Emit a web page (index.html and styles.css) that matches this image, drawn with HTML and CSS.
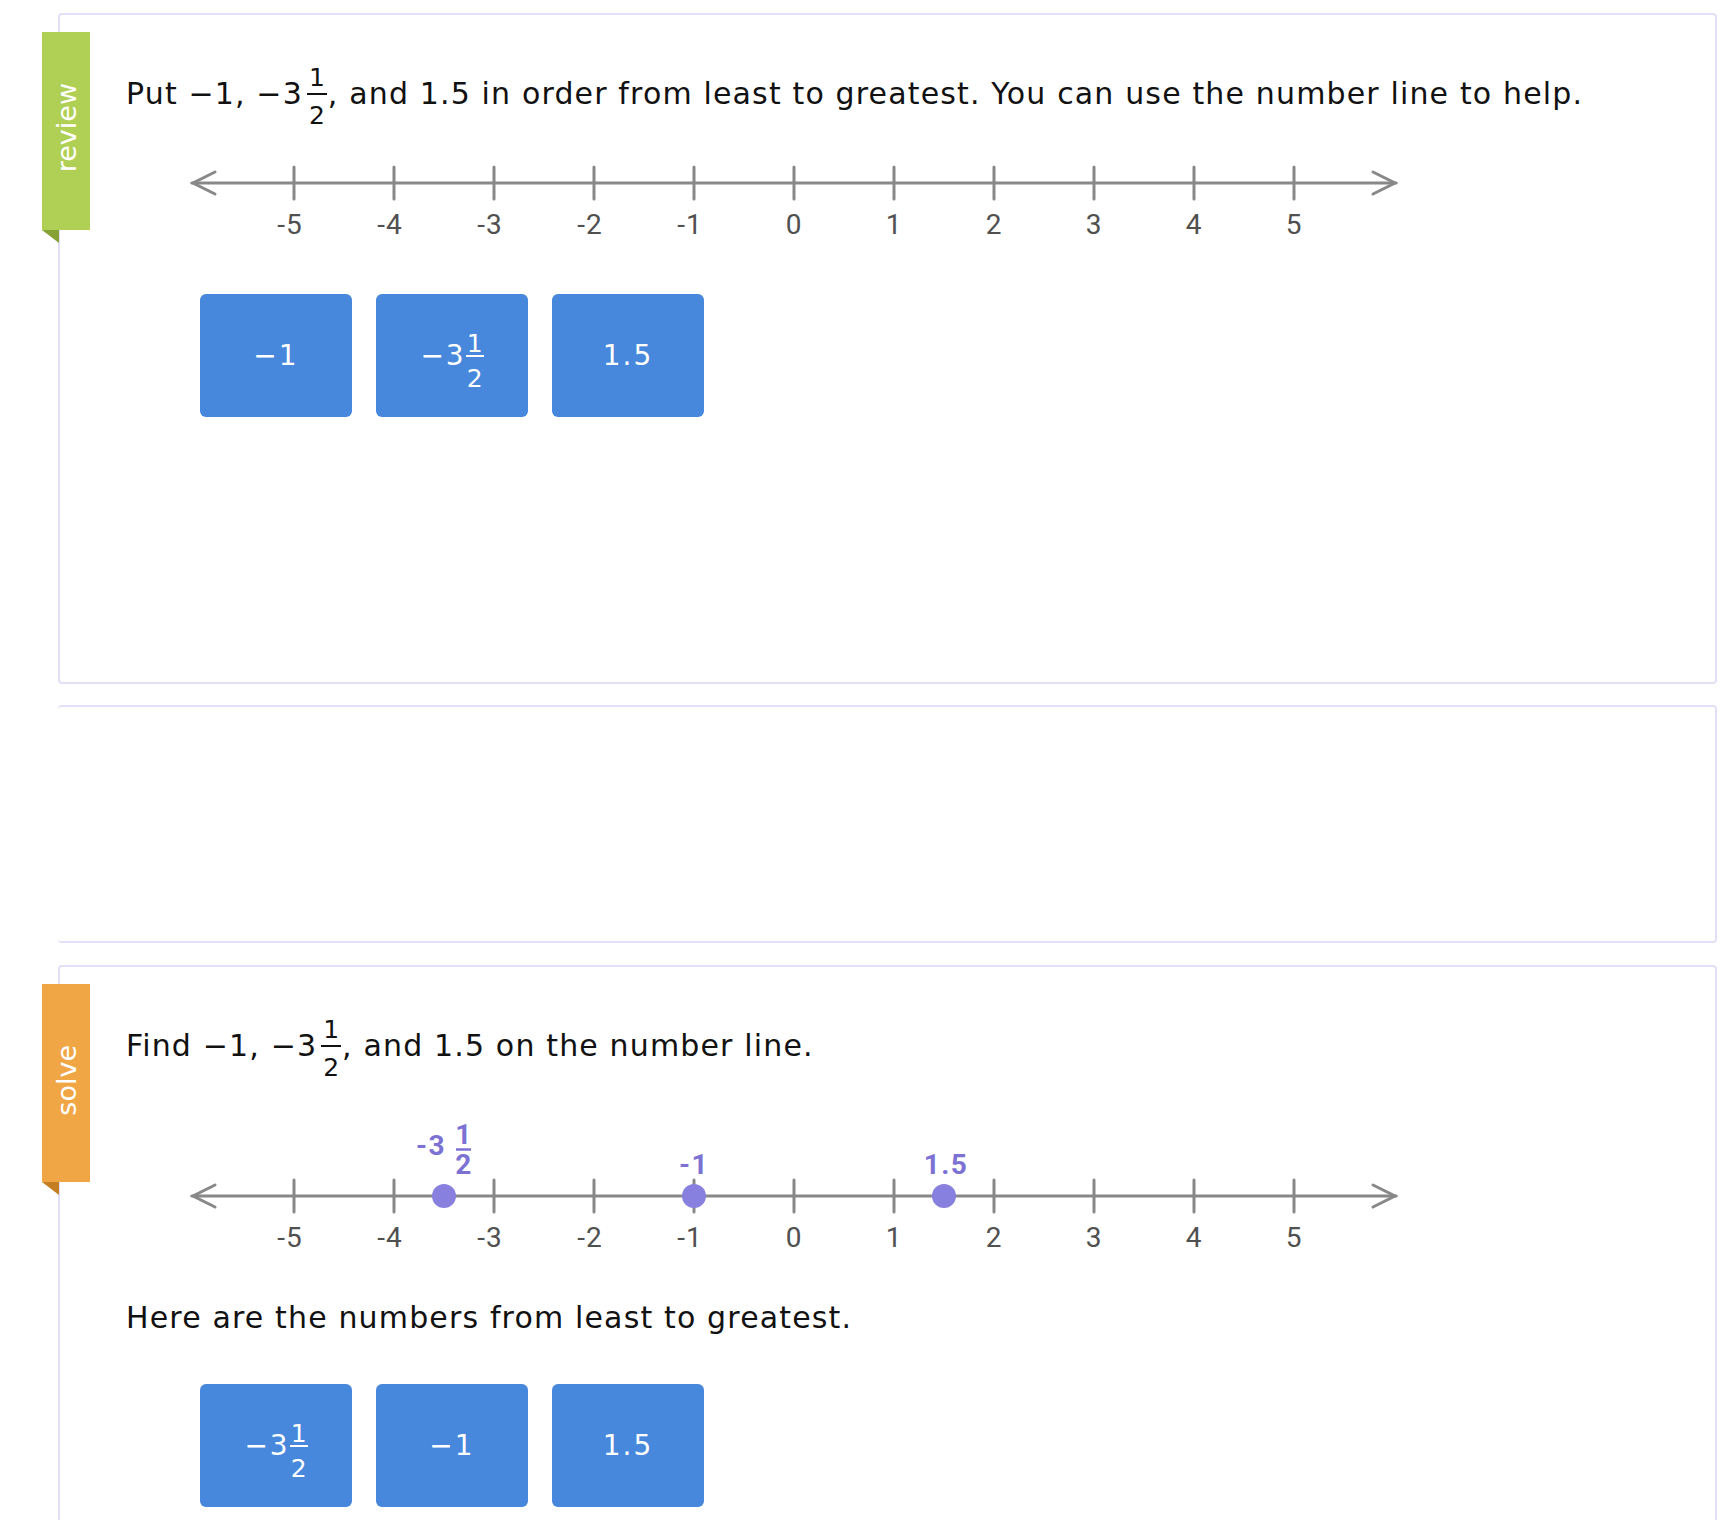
FILE: index.html
```html
<!DOCTYPE html>
<html lang="en">
<head>
    <meta charset="UTF-8">
    <title>Ordering numbers</title>
    <link rel="stylesheet" href="styles.css">
</head>
<body>
    <main class="page">
        <!-- Review -->
        <section class="card card-review">
            <div class="ribbon ribbon-green"><span>review</span></div>
            <p class="question">Put −1, −3<span class="frac"><span class="num">1</span><span class="den">2</span></span>, and 1.5 in order from least to greatest. You can use the number line to help.</p>

            <svg class="numline" width="1300" height="85" viewBox="0 0 1300 85">
                <g class="axis">
                    <line x1="66" y1="22" x2="1270" y2="22"/>
                    <polyline points="89,11 67,22 89,33"/>
                    <polyline points="1247,11 1269,22 1247,33"/>
                    <line x1="168" y1="6" x2="168" y2="38"/>
                    <line x1="268" y1="6" x2="268" y2="38"/>
                    <line x1="368" y1="6" x2="368" y2="38"/>
                    <line x1="468" y1="6" x2="468" y2="38"/>
                    <line x1="568" y1="6" x2="568" y2="38"/>
                    <line x1="668" y1="6" x2="668" y2="38"/>
                    <line x1="768" y1="6" x2="768" y2="38"/>
                    <line x1="868" y1="6" x2="868" y2="38"/>
                    <line x1="968" y1="6" x2="968" y2="38"/>
                    <line x1="1068" y1="6" x2="1068" y2="38"/>
                    <line x1="1168" y1="6" x2="1168" y2="38"/>
                </g>
                <g class="ticklabels">
                    <text x="164" y="73">-5</text>
                    <text x="264" y="73">-4</text>
                    <text x="364" y="73">-3</text>
                    <text x="464" y="73">-2</text>
                    <text x="564" y="73">-1</text>
                    <text x="668" y="73">0</text>
                    <text x="768" y="73">1</text>
                    <text x="868" y="73">2</text>
                    <text x="968" y="73">3</text>
                    <text x="1068" y="73">4</text>
                    <text x="1168" y="73">5</text>
                </g>
            </svg>

            <div class="tiles">
                <div class="tile">−1</div>
                <div class="tile">−3<span class="frac frac-tile"><span class="num">1</span><span class="den">2</span></span></div>
                <div class="tile">1.5</div>
            </div>
        </section>

        <!-- empty panel -->
        <section class="card card-blank"></section>

        <!-- Solve -->
        <section class="card card-solve">
            <div class="ribbon ribbon-orange"><span>solve</span></div>
            <p class="question">Find −1, −3<span class="frac"><span class="num">1</span><span class="den">2</span></span>, and 1.5 on the number line.</p>

            <svg class="numline numline-points" width="1300" height="145" viewBox="0 0 1300 145">
                <g class="axis">
                    <line x1="66" y1="85" x2="1270" y2="85"/>
                    <polyline points="89,74 67,85 89,96"/>
                    <polyline points="1247,74 1269,85 1247,96"/>
                    <line x1="168" y1="69" x2="168" y2="101"/>
                    <line x1="268" y1="69" x2="268" y2="101"/>
                    <line x1="368" y1="69" x2="368" y2="101"/>
                    <line x1="468" y1="69" x2="468" y2="101"/>
                    <line x1="568" y1="69" x2="568" y2="101"/>
                    <line x1="668" y1="69" x2="668" y2="101"/>
                    <line x1="768" y1="69" x2="768" y2="101"/>
                    <line x1="868" y1="69" x2="868" y2="101"/>
                    <line x1="968" y1="69" x2="968" y2="101"/>
                    <line x1="1068" y1="69" x2="1068" y2="101"/>
                    <line x1="1168" y1="69" x2="1168" y2="101"/>
                </g>
                <g class="ticklabels">
                    <text x="164" y="136">-5</text>
                    <text x="264" y="136">-4</text>
                    <text x="364" y="136">-3</text>
                    <text x="464" y="136">-2</text>
                    <text x="564" y="136">-1</text>
                    <text x="668" y="136">0</text>
                    <text x="768" y="136">1</text>
                    <text x="868" y="136">2</text>
                    <text x="968" y="136">3</text>
                    <text x="1068" y="136">4</text>
                    <text x="1168" y="136">5</text>
                </g>
                <g class="points">
                    <circle cx="318" cy="85" r="12"/>
                    <circle cx="568" cy="85" r="12"/>
                    <circle cx="818" cy="85" r="12"/>
                </g>
                <g class="pointlabels">
                    <text x="320" y="44" class="end">-3</text>
                    <text x="338" y="33">1</text>
                    <line x1="330" y1="38.5" x2="345" y2="38.5"/>
                    <text x="338" y="63">2</text>
                    <text x="568" y="63">-1</text>
                    <text x="820" y="63">1.5</text>
                </g>
            </svg>

            <p class="question answer">Here are the numbers from least to greatest.</p>

            <div class="tiles">
                <div class="tile">−3<span class="frac frac-tile"><span class="num">1</span><span class="den">2</span></span></div>
                <div class="tile">−1</div>
                <div class="tile">1.5</div>
            </div>
        </section>
    </main>
</body>
</html>
```

FILE: styles.css
```css
body {
    margin: 0;
    padding: 0;
    background-color: #fff;
    font-family: "DejaVu Sans", Verdana, sans-serif;
    color: #111;
}
.page {
    padding: 13px 0 0 58px;
    width: 1659px;
}
.card {
    position: relative;
    box-sizing: border-box;
    border: 2px solid #e2dff7;
    border-radius: 4px;
    padding: 50px 0 0 66px;
    background-color: #fff;
}
.card-review {
    height: 671px;
}
.card-blank {
    margin-top: 21px;
    height: 238px;
    border-left: none;
}
.card-solve {
    margin-top: 22px;
    min-height: 620px;
}

/* side ribbon */
.ribbon {
    position: absolute;
    left: -18px;
    top: 17px;
    width: 48px;
    height: 198px;
    display: flex;
    align-items: center;
    justify-content: center;
}
.ribbon span {
    writing-mode: vertical-rl;
    transform: rotate(180deg);
    color: #fff;
    font-size: 27px;
    margin-bottom: 6px;
}
.ribbon::after {
    content: "";
    position: absolute;
    left: 0;
    top: 100%;
    width: 0;
    height: 0;
    border-left: 17px solid transparent;
}
.ribbon-green {
    background-color: #b0cf55;
}
.ribbon-green::after {
    border-top: 13px solid #86a237;
}
.ribbon-orange {
    background-color: #f0a645;
}
.ribbon-orange::after {
    border-top: 13px solid #c47e22;
}

.question {
    margin: 0;
    font-size: 30px;
    line-height: 48px;
    letter-spacing: 1.15px;
}
.answer {
    margin-top: 38px;
}

/* stacked fraction */
.frac {
    display: inline-block;
    vertical-align: -20px;
    font-size: 25px;
    text-align: center;
    letter-spacing: 0;
    margin: 0 1px 0 4px;
}
.frac .num {
    display: block;
    line-height: 25px;
    padding: 0 2px 3px;
}
.frac .den {
    display: block;
    line-height: 25px;
    padding-top: 8px;
    border-top: 2px solid currentColor;
}

.numline {
    display: block;
    margin-top: 33px;
}
.numline-points {
    margin-top: 31px;
}
.axis line,
.axis polyline {
    stroke: #888;
    stroke-width: 3;
    stroke-linecap: round;
    fill: none;
}
.ticklabels text {
    font-family: Roboto, "Liberation Sans", sans-serif;
    font-size: 28px;
    letter-spacing: 1px;
    fill: #505050;
    text-anchor: middle;
}
.points circle {
    fill: #8880df;
}
.pointlabels text {
    font-family: Roboto, "Liberation Sans", sans-serif;
    font-weight: bold;
    font-size: 28px;
    letter-spacing: 1.5px;
    fill: #7c72d4;
    text-anchor: middle;
}
.pointlabels text.end {
    text-anchor: end;
}
.pointlabels line {
    stroke: #7c72d4;
    stroke-width: 2.5;
}

.tiles {
    display: flex;
    gap: 24px;
    margin: 48px 0 0 74px;
}
.card-solve .tiles {
    margin-top: 42px;
}
.tile {
    width: 152px;
    height: 123px;
    border-radius: 6px;
    background-color: #4788dc;
    color: #fff;
    font-size: 28px;
    letter-spacing: 2px;
    display: flex;
    align-items: center;
    justify-content: center;
}
.frac-tile {
    font-size: 25px;
    margin: 0;
}
.frac-tile .num {
    line-height: 23px;
    padding: 11px 1px 0;
}
.frac-tile .den {
    line-height: 25px;
    padding-top: 9px;
}
```
